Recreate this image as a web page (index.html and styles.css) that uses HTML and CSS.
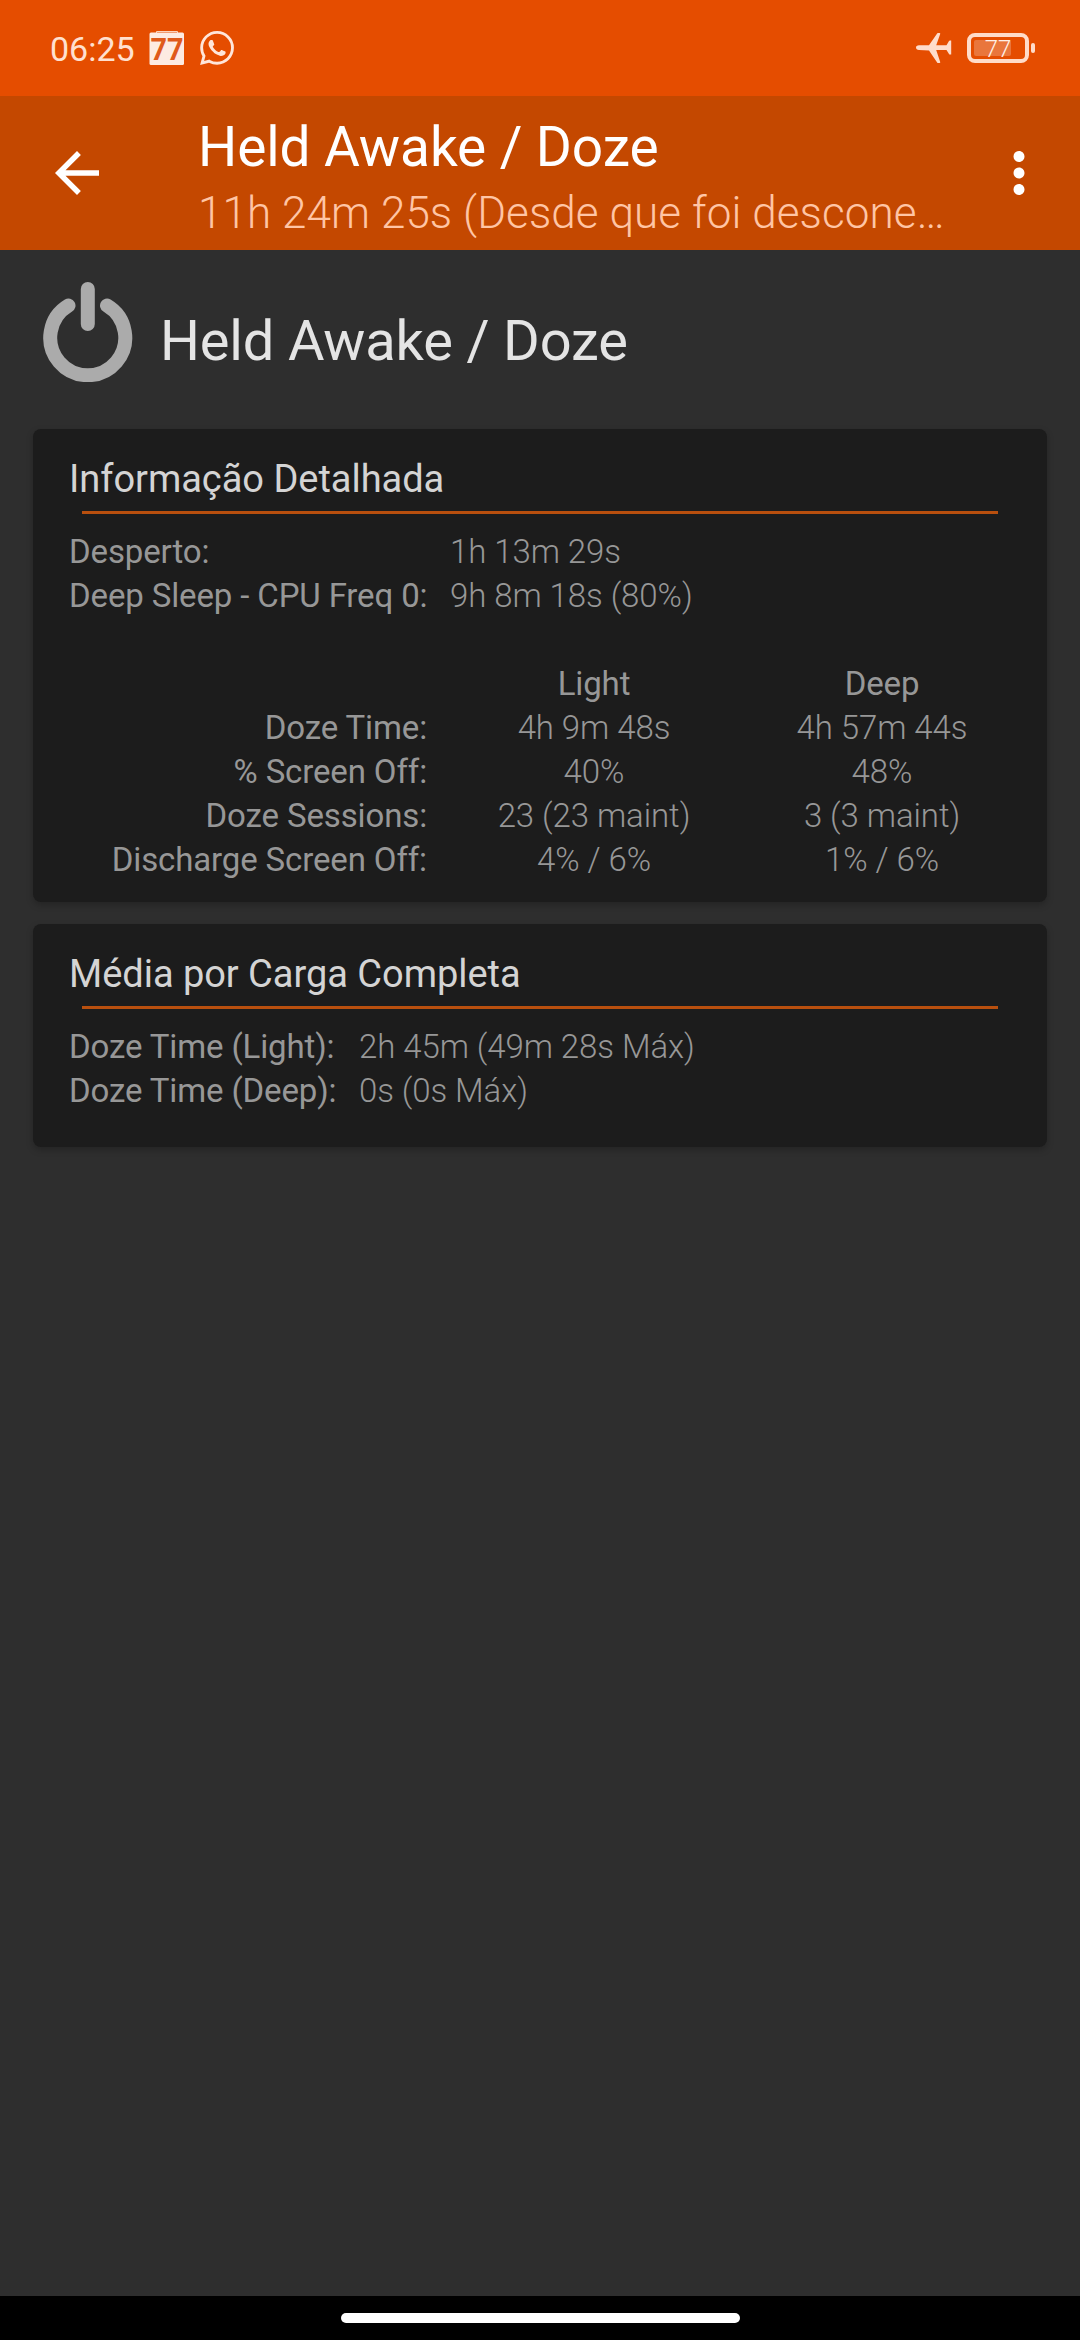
FILE: index.html
```html
<!DOCTYPE html>
<html lang="pt">
<head>
<meta charset="utf-8">
<title>Held Awake / Doze</title>
<link rel="stylesheet" href="styles.css">
</head>
<body>
<div class="screen">
  <div class="status">
    <span class="clock">06:25</span>
    <svg class="level-icon" viewBox="0 0 36 36">
      <path d="M7.500 4V1.500H28.500V4" fill="none" stroke="#fbd3bd" stroke-width="1"/>
      <rect x="0.500" y="2.500" width="34.500" height="32.500" rx="1.500" fill="#fdebe2"/>
      <text x="18" y="30" text-anchor="middle" textLength="33" lengthAdjust="spacingAndGlyphs">77</text>
    </svg>
    <svg class="chat-icon" viewBox="0 0 24 24"><path d="M17.472 14.382c-.297-.149-1.758-.867-2.030-.967-.273-.099-.471-.148-.670.150-.197.297-.767.966-.940 1.164-.173.199-.347.223-.644.075-.297-.150-1.255-.463-2.390-1.475-.883-.788-1.480-1.761-1.653-2.059-.173-.297-.018-.458.130-.606.134-.133.298-.347.446-.520.149-.174.198-.298.298-.497.099-.198.050-.371-.025-.520-.075-.149-.669-1.612-.916-2.207-.242-.579-.487-.500-.669-.510-.173-.008-.371-.010-.570-.010-.198 0-.520.074-.792.372-.272.297-1.040 1.016-1.040 2.479 0 1.462 1.065 2.875 1.213 3.074.149.198 2.096 3.200 5.077 4.487.709.306 1.262.489 1.694.625.712.227 1.360.195 1.871.118.571-.085 1.758-.719 2.006-1.413.248-.694.248-1.289.173-1.413-.074-.124-.272-.198-.570-.347m-5.421 7.403h-.004a9.870 9.870 0 01-5.031-1.378l-.361-.214-3.741.982.998-3.648-.235-.374a9.860 9.860 0 01-1.510-5.260c.001-5.450 4.436-9.884 9.888-9.884 2.640 0 5.122 1.030 6.988 2.898a9.825 9.825 0 012.893 6.994c-.003 5.450-4.437 9.884-9.885 9.884m8.413-18.297A11.815 11.815 0 0012.050 0C5.495 0 .160 5.335.157 11.892c0 2.096.547 4.142 1.588 5.945L.057 24l6.305-1.654a11.882 11.882 0 005.683 1.448h.005c6.554 0 11.890-5.335 11.893-11.893a11.821 11.821 0 00-3.480-8.413z"/></svg>
    <span class="spacer"></span>
    <svg class="plane-icon" viewBox="0 0 36 30"><path d="M3 12.300H13L21.300 0.300Q21.500 0 22 0H23.500Q24.500 0 24.200 1L20.200 12.300H30.500L33 8Q33.200 7.500 34 7.500H35.200V21.500H34Q33.200 21.500 33 21L30.500 17H20.200L24.200 29Q24.500 30 23.500 30H22Q21.500 30 21.300 29.700L13 17.500L3 17Q0 16.800 0 14.600Q0 12.500 3 12.300Z"/></svg>
    <svg class="battery" viewBox="0 0 68 30">
      <rect x="2" y="2" width="58" height="26" rx="6" fill="none" stroke="#ffdcc9" stroke-width="4"/>
      <rect x="64" y="10" width="4" height="10" rx="2" fill="#ffdcc9"/>
      <rect x="7" y="7" width="37" height="16" rx="2" fill="#e9763c"/>
      <text x="31" y="24" text-anchor="middle">77</text>
    </svg>
  </div>

  <header class="appbar">
    <svg class="icon" viewBox="0 0 24 24"><path d="M20 11H7.830l5.590-5.590L12 4l-8 8 8 8 1.410-1.410L7.830 13H20v-2z"/></svg>
    <div class="titles">
      <h1 class="title">Held Awake / Doze</h1>
      <p class="subtitle">11h 24m 25s (Desde que foi descone…</p>
    </div>
    <svg class="icon" viewBox="0 0 24 24"><path d="M12 8c1.100 0 2-.900 2-2s-.900-2-2-2-2 .900-2 2 .900 2 2 2zm0 2c-1.100 0-2 .900-2 2s.900 2 2 2 2-.900 2-2-.900-2-2-2zm0 6c-1.100 0-2 .900-2 2s.900 2 2 2 2-.900 2-2-.900-2-2-2z"/></svg>
  </header>

  <main class="content">
    <div class="heading">
      <svg class="power" viewBox="0 0 92 104"><path d="M26.500 27.500A37.500 37.500 0 1 0 65 27.500M45.800 11V46"/></svg>
      <h2 class="heading-text">Held Awake / Doze</h2>
    </div>

    <section class="card detail">
      <h3 class="card-title">Informação Detalhada</h3>
      <div class="rule"></div>
      <div class="grid wide">
        <span>Desperto:</span><span class="value span2">1h 13m 29s</span>
        <span>Deep Sleep - CPU Freq 0:</span><span class="value span2">9h 8m 18s (80%)</span>
      </div>
      <div class="grid wide table">
        <span></span><span>Light</span><span>Deep</span>
        <span class="label">Doze Time:</span><span class="value">4h 9m 48s</span><span class="value">4h 57m 44s</span>
        <span class="label">% Screen Off:</span><span class="value">40%</span><span class="value">48%</span>
        <span class="label">Doze Sessions:</span><span class="value">23 (23 maint)</span><span class="value">3 (3 maint)</span>
        <span class="label">Discharge Screen Off:</span><span class="value">4% / 6%</span><span class="value">1% / 6%</span>
      </div>
    </section>

    <section class="card average">
      <h3 class="card-title">Média por Carga Completa</h3>
      <div class="rule"></div>
      <div class="grid narrow">
        <span>Doze Time (Light):</span><span class="value">2h 45m (49m 28s Máx)</span>
        <span>Doze Time (Deep):</span><span class="value">0s (0s Máx)</span>
      </div>
    </section>
  </main>

  <div class="navbar"><div class="pill"></div></div>
</div>
</body>
</html>
```
FILE: styles.css
```css
* { box-sizing: border-box; margin: 0; padding: 0; }

body {
  font-family: Roboto, "Noto Sans", sans-serif;
  font-weight: 400;
  background: #2e2e2e;
}

.screen {
  display: flex;
  flex-direction: column;
  width: 1080px;
  height: 2340px;
  overflow: hidden;
}

.status {
  display: flex;
  align-items: center;
  height: 96px;
  padding: 0 45px 0 50px;
  background: #e54d00;
}

.clock {
  font-size: 34px;
  line-height: 40px;
  color: #ffe0cf;
  width: 99px;
  padding-top: 2px;
}

.level-icon { width: 36px; height: 36px; overflow: visible; }
.level-icon text { font-size: 32px; font-weight: 700; fill: #df5a1b; }
.chat-icon { width: 34px; height: 34px; margin-left: 15px; margin-bottom: 1px; fill: #ffe6da; }
.spacer { flex: 1; }
.plane-icon { width: 36px; height: 30px; fill: #ffdccb; margin-right: 15px; }
.battery { width: 68px; height: 30px; overflow: visible; }
.battery text { font-size: 24px; font-weight: 300; fill: #fff0e8; }

.appbar {
  display: flex;
  align-items: center;
  height: 154px;
  padding: 0 28px 0 44px;
  background: #c44800;
}

.icon { width: 66px; height: 66px; flex: none; fill: #fff; }

.titles {
  flex: 1;
  min-width: 0;
  height: 154px;
  padding: 19px 38px 0 88px;
}

.title {
  font-size: 55px;
  font-weight: 400;
  line-height: 64px;
  letter-spacing: -0.1px;
  color: #fff;
}

.subtitle {
  margin-top: 8px;
  font-size: 44px;
  font-weight: 300;
  line-height: 52px;
  letter-spacing: 0.08px;
  color: #ffc5a5;
  white-space: nowrap;
}

.content {
  flex: 1;
  display: flex;
  flex-direction: column;
  gap: 22px;
  padding: 0 33px;
  background: #2e2e2e;
}

.heading {
  display: flex;
  height: 157px;
  padding: 28px 9px 0;
}

.power {
  width: 92px;
  height: 104px;
  fill: none;
  stroke: #ababab;
  stroke-width: 14;
  stroke-linecap: round;
}

.heading-text {
  padding: 31px 0 0 26px;
  font-size: 56px;
  font-weight: 400;
  line-height: 64px;
  letter-spacing: -0.17px;
  color: #e4e4e4;
}

.card {
  padding: 25px 21px 0 36px;
  background: #1c1c1c;
  border-radius: 8px;
  box-shadow: 0 3px 7px rgba(0, 0, 0, 0.22);
}

.detail { height: 473px; }
.average { height: 223px; }

.card-title {
  font-size: 38px;
  font-weight: 400;
  line-height: 50px;
  letter-spacing: -0.03px;
  color: #d4d4d4;
}

.rule {
  height: 3px;
  margin: 7px 28px 16px 13px;
  background: #b84f0e;
}

.grid {
  display: grid;
  grid-auto-rows: 44px;
  font-size: 33px;
  line-height: 44px;
  letter-spacing: -0.13px;
  color: #979797;
  white-space: nowrap;
}

.wide { grid-template-columns: 381px 288px 288px; }
.narrow { grid-template-columns: 290px auto; }
.value { font-weight: 300; letter-spacing: -0.08px; }
.span2 { grid-column: span 2; }
.table { margin-top: 44px; text-align: center; }
.table .label { text-align: right; padding-right: 23px; }

.navbar {
  display: flex;
  justify-content: center;
  height: 44px;
  padding-top: 17px;
  background: #000;
}

.pill {
  width: 399px;
  height: 10px;
  border-radius: 5px;
  background: #fff;
}
```
